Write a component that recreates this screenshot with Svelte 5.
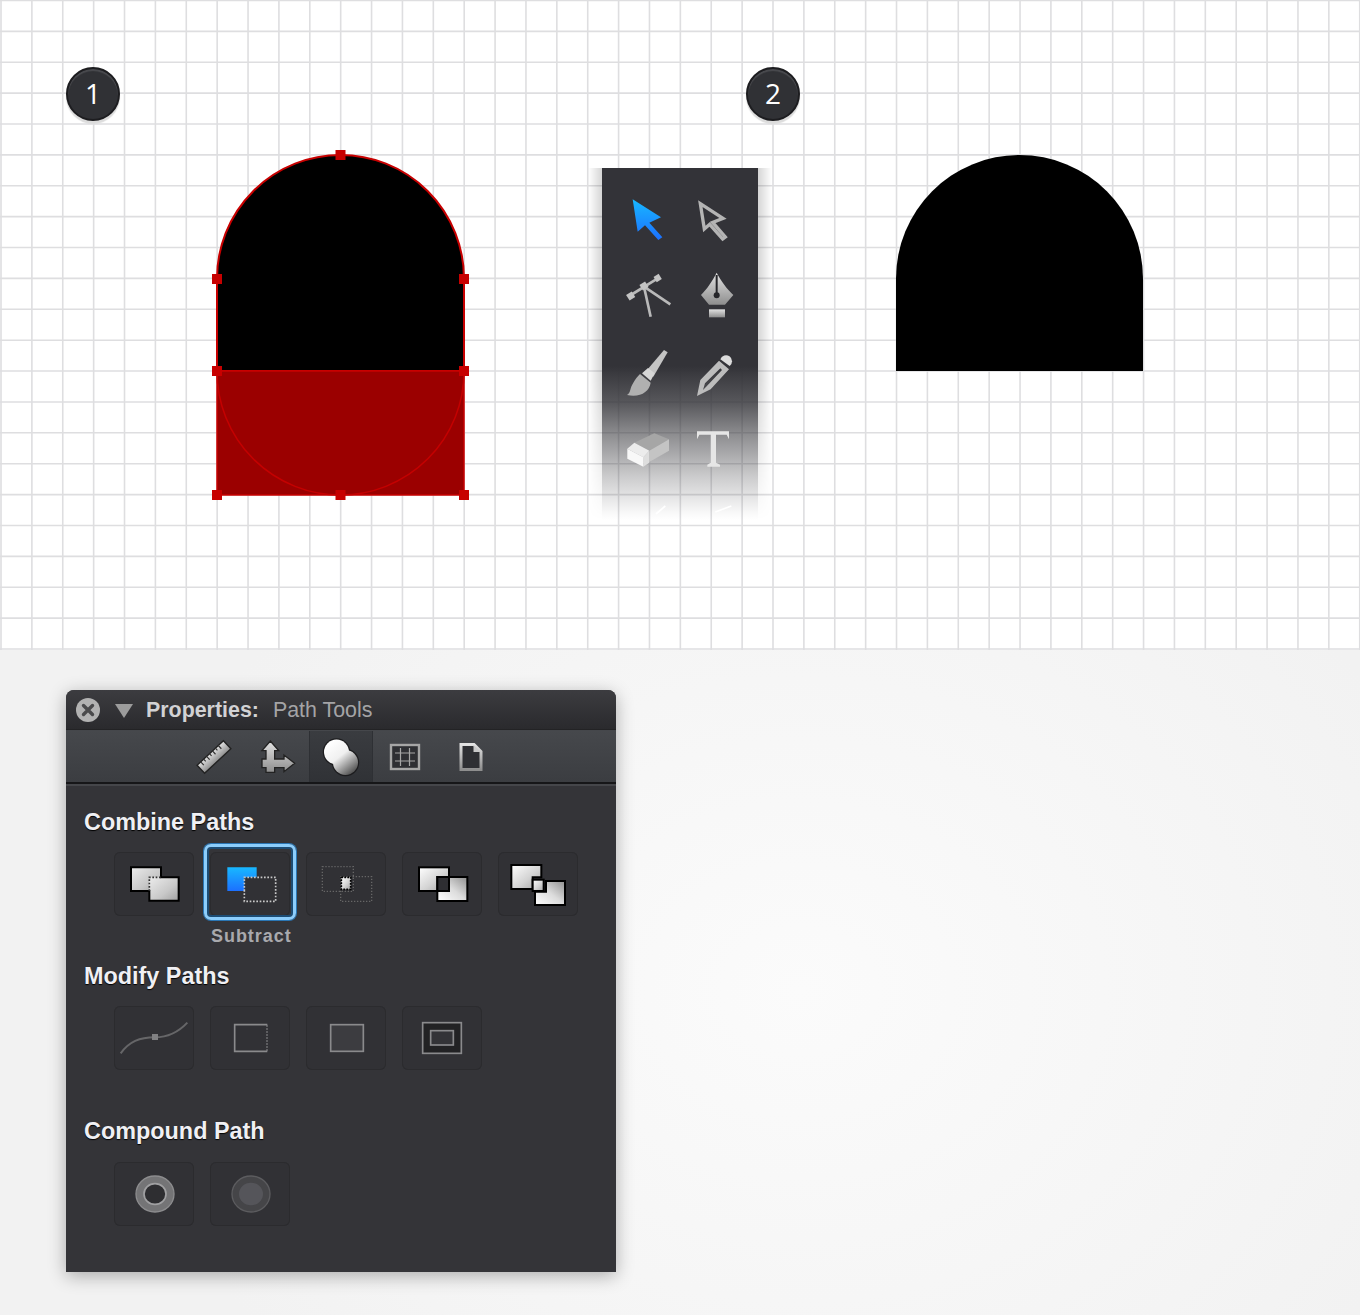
<script>
  // grid period measured from the reference
  const step = 30.88;
  const vLines = Array.from({ length: 45 }, (_, i) => 1 + i * step);
  const hLines = Array.from({ length: 22 }, (_, i) => 0.5 + i * step);
  const handles = [
    [340.5, 155], [217, 279], [464, 279], [217, 371],
    [464, 371], [217, 495], [340.5, 495], [464, 495]
  ];
</script>

<div class="page">
  <section class="canvas">
    <svg class="art" width="1360" height="650" viewBox="0 0 1360 650">
      <defs>
        <linearGradient id="metal" x1="0" y1="0" x2="0" y2="1">
          <stop offset="0" stop-color="#e2e2e2" />
          <stop offset="1" stop-color="#8e8e8e" />
        </linearGradient>
        <linearGradient id="sheet" x1="0" y1="0" x2="1" y2="1">
          <stop offset="0" stop-color="#ffffff" />
          <stop offset="0.55" stop-color="#d4d4d4" />
          <stop offset="1" stop-color="#a2a2a2" />
        </linearGradient>
        <linearGradient id="sheetDim" x1="0" y1="0" x2="1" y2="1">
          <stop offset="0" stop-color="#ececec" />
          <stop offset="0.6" stop-color="#c8c8c8" />
          <stop offset="1" stop-color="#a0a0a0" />
        </linearGradient>
        <linearGradient id="sheetBack" x1="0" y1="1" x2="1" y2="0">
          <stop offset="0" stop-color="#ffffff" />
          <stop offset="0.5" stop-color="#dcdcdc" />
          <stop offset="1" stop-color="#8f8f8f" />
        </linearGradient>
        <linearGradient id="ball" gradientUnits="userSpaceOnUse" x1="8" y1="6" x2="32" y2="36">
          <stop offset="0" stop-color="#ffffff" />
          <stop offset="0.45" stop-color="#f0f0f0" />
          <stop offset="1" stop-color="#505050" />
        </linearGradient>
        <linearGradient id="blue" x1="0" y1="0" x2="0" y2="1">
          <stop offset="0" stop-color="#18b8ff" />
          <stop offset="1" stop-color="#1c70ff" />
        </linearGradient>
      </defs>
      {#each vLines as x}
        <line x1={x} y1="0" x2={x} y2="650" class="grid" />
      {/each}
      {#each hLines as y}
        <line x1="0" y1={y} x2="1360" y2={y} class="grid" />
      {/each}

      <path d="M217 371V278.5A123.5 123.5 0 0 1 464 278.5V371Z" fill="#000" stroke="#c80000" stroke-width="2" />
      <rect x="217" y="371" width="247" height="124" fill="#9b0000" stroke="#c80000" stroke-width="1.5" />
      <path d="M217 371.5A123.5 123.5 0 0 0 464 371.5" fill="none" stroke="#c40000" stroke-width="1.5" />
      {#each handles as [x, y]}
        <rect x={x - 5} y={y - 5} width="10" height="10" fill="#c70000" />
      {/each}

      <path d="M896 371V278.5A123.5 123.5 0 0 1 1143 278.5V371Z" fill="#000" />
    </svg>

    <div class="badge one">1</div>
    <div class="badge two">2</div>

    <div class="tools">
      <svg viewBox="75 66 198 228" width="66" height="76">
        <polygon points="128,118 213,172 178,188 217,232 205,240 165,196 143,215" fill="url(#blue)" />
      </svg>
      <svg viewBox="273 66 198 228" width="66" height="76">
        <polygon points="331,131 399,175 368,187 406,231 398,237 359,193 343,207" fill="none" stroke="#b4b4b4" stroke-width="10" stroke-linejoin="miter" />
      </svg>

      <svg viewBox="75 294 198 228" width="66" height="76">
        <g stroke="#b9b9b9" stroke-width="8" fill="none">
          <line x1="118" y1="408" x2="208" y2="352" />
          <line x1="162" y1="380" x2="182" y2="470" />
          <line x1="162" y1="380" x2="241" y2="433" />
        </g>
        <rect x="112" y="398" width="20" height="20" fill="#c4c4c4" transform="rotate(-32 122 408)" />
        <rect x="152" y="368" width="20" height="20" fill="#c4c4c4" transform="rotate(-32 162 378)" />
        <rect x="194" y="345" width="18" height="18" fill="#c4c4c4" transform="rotate(-32 203 354)" />
      </svg>
      <svg viewBox="273 294 198 228" width="66" height="76">
        <path d="M380 338C392 362 412 388 430 405L405 434H357L333 405C350 388 368 362 380 338Z" fill="url(#metal)" />
        <line x1="380" y1="345" x2="380" y2="400" stroke="#26262a" stroke-width="6" />
        <circle cx="380" cy="406" r="9" fill="#26262a" />
        <rect x="357" y="448" width="48" height="24" fill="url(#metal)" />
      </svg>

      <svg viewBox="75 522 198 228" width="66" height="76">
        <polygon points="222,570 233,577 190,650 166,636" fill="#c4c4c4" />
        <polygon points="156,640 174,624 194,640 182,662" fill="#d6d6d6" />
        <path d="M150 642L182 668C178 695 150 714 111 705C124 696 118 686 130 668C136 658 142 650 150 642Z" fill="#b0b0b0" />
      </svg>
      <svg viewBox="273 522 198 228" width="66" height="76">
        <path d="M391 598A18 18 0 1 1 419 618Z" fill="#dcdcdc" />
        <path d="M321 708L331 660L387 602L417 628L362 688ZM339 690L350 679L396 630L391 625L345 670Z" fill="#bcbcbc" fill-rule="evenodd" />
      </svg>

      <svg viewBox="75 750 198 228" width="66" height="76">
        <polygon points="133,848 193,820 237,838 178,872" fill="#a6a6a6" />
        <polygon points="178,872 237,838 237,872 178,906" fill="#c4c4c4" />
        <polygon points="160,892 178,872 178,908 160,920" fill="#dedede" />
        <polygon points="112,866 133,848 178,872 160,892" fill="#ececec" />
        <polygon points="112,866 160,892 160,920 112,896" fill="#f8f8f8" />
      </svg>
      <svg viewBox="273 750 198 228" width="66" height="76">
        <path d="M321 814H417V838L410 824H378V908L390 914V920H352V914L362 908V824H328L321 838Z" fill="#e6e6e6" />
      </svg>

      <svg viewBox="75 978 198 114" width="66" height="38">
        <line x1="198" y1="1062" x2="226" y2="1038" stroke="#fff" stroke-width="5" />
      </svg>
      <svg viewBox="273 978 198 114" width="66" height="38">
        <line x1="376" y1="1056" x2="424" y2="1038" stroke="#fff" stroke-width="5" />
      </svg>
    </div>
  </section>

  <section class="lower">
    <div class="panel">
      <header class="titlebar">
        <svg width="24" height="24" viewBox="0 0 24 24">
          <circle cx="12" cy="12" r="12" fill="#b2b2b2" />
          <path d="M7.5 7.5L16.5 16.5M16.5 7.5L7.5 16.5" stroke="#4a4a4c" stroke-width="3.4" stroke-linecap="round" />
        </svg>
        <span class="arrow"></span>
        <strong>Properties:</strong>
        <span class="subtitle">Path Tools</span>
      </header>

      <nav class="tabs">
        <div class="tab">
          <svg width="40" height="40" viewBox="0 0 40 40">
            <g transform="rotate(-43 21 20)">
              <rect x="3" y="14.5" width="36" height="11" fill="url(#metal)" stroke="#222" stroke-width="1.4" />
              <path d="M8 14.5v4.5M12 14.5v3M16 14.5v4.5M20 14.5v3M24 14.5v4.5M28 14.5v3M32 14.5v4.5" stroke="#333" stroke-width="1.2" />
            </g>
          </svg>
        </div>
        <div class="tab narrow">
          <svg width="40" height="40" viewBox="208 21 120 120">
            <polygon points="245,33 270,62 258,62 258,87 286,87 286,75 318,100 286,125 286,113 258,113 258,127 232,127 232,113 220,113 220,87 232,87 232,62 220,62" fill="url(#metal)" stroke="#222" stroke-width="4" />
          </svg>
        </div>
        <div class="tab active">
          <svg width="40" height="40" viewBox="0 0 40 40">
            <circle cx="15.5" cy="15" r="12.5" fill="#1c1c1e" stroke="#1c1c1e" stroke-width="2.4" />
            <circle cx="24.5" cy="25.5" r="12.5" fill="#1c1c1e" stroke="#1c1c1e" stroke-width="2.4" />
            <circle cx="15.5" cy="15" r="12.5" fill="url(#ball)" />
            <circle cx="24.5" cy="25.5" r="12.5" fill="url(#ball)" />
          </svg>
        </div>
        <div class="tab">
          <svg width="32" height="28" viewBox="0 0 32 28">
            <rect x="2" y="2" width="28" height="24" fill="#2e2f33" stroke="#a6a6a6" stroke-width="2.4" />
            <path d="M6 10H26M6 18H26M11.5 5V23M20.5 5V23" stroke="#a6a6a6" stroke-width="1.2" />
          </svg>
        </div>
        <div class="tab">
          <svg width="24" height="28" viewBox="0 0 24 28">
            <path d="M2 1.5H15L22 8.5V26.5H2Z" fill="#2e2f33" stroke="url(#metal)" stroke-width="3" />
            <path d="M14.5 2V9H22Z" fill="#c8c8c8" />
          </svg>
        </div>
      </nav>

      <div class="content">
        <h3>Combine Paths</h3>
        <div class="row">
          <button>
            <svg viewBox="42 36 240 192" width="80" height="64">
              <rect x="93" y="82" width="90" height="71" fill="url(#sheetDim)" />
              <rect x="148" y="112" width="88" height="70" fill="url(#sheetDim)" />
              <path d="M93 82H183V112H236V182H148V153H93Z" fill="none" stroke="#000" stroke-width="6" />
              <path d="M148 153V112H183" fill="none" stroke="#333" stroke-width="5" stroke-dasharray="5 5" />
            </svg>
          </button>
          <button class="selected">
            <svg viewBox="330 36 240 192" width="80" height="64">
              <path d="M382 82H470V112H433V153H382Z" fill="url(#blue)" />
              <path d="M433 153V112H527V184H433Z" fill="none" stroke="#c8c8c8" stroke-width="5" stroke-dasharray="5 5" />
            </svg>
          </button>
          <button>
            <svg viewBox="618 36 240 192" width="80" height="64">
              <rect x="667" y="80" width="93" height="74" fill="none" stroke="#666" stroke-width="4" stroke-dasharray="4 5" />
              <rect x="722" y="110" width="93" height="74" fill="none" stroke="#666" stroke-width="4" stroke-dasharray="4 5" />
              <rect x="724" y="112" width="28" height="36" fill="url(#sheet)" stroke="#000" stroke-width="5" stroke-dasharray="5 4" />
            </svg>
          </button>
          <button>
            <svg viewBox="906 36 240 192" width="80" height="64">
              <rect x="957" y="82" width="90" height="71" fill="url(#sheet)" stroke="#000" stroke-width="6" />
              <rect x="1012" y="111" width="90" height="72" fill="url(#sheetBack)" stroke="#000" stroke-width="6" />
              <rect x="1012" y="111" width="35" height="42" fill="#2e2e32" stroke="#000" stroke-width="6" />
            </svg>
          </button>
          <button>
            <svg viewBox="1194 36 240 192" width="80" height="64">
              <path d="M1234 75H1324V112H1298V147H1234Z" fill="url(#sheet)" stroke="#000" stroke-width="6" />
              <path d="M1338 123H1395V195H1305V155H1338Z" fill="url(#sheetBack)" stroke="#000" stroke-width="6" />
              <rect x="1298" y="119" width="33" height="34" fill="url(#sheet)" stroke="#000" stroke-width="6" />
            </svg>
          </button>
        </div>
        <p class="caption">Subtract</p>

        <h3>Modify Paths</h3>
        <div class="row">
          <button>
            <svg viewBox="42 18 240 192" width="80" height="64">
              <path d="M62 160C88 125 118 112 165 112C200 112 232 100 262 68" fill="none" stroke="#666668" stroke-width="6" />
              <rect x="156" y="102" width="18" height="18" fill="#808082" />
            </svg>
          </button>
          <button>
            <svg viewBox="330 18 240 192" width="80" height="64">
              <path d="M502 74H404V154H502" fill="none" stroke="#8a8a8c" stroke-width="5" />
              <path d="M501 76V152" stroke="#8a8a8c" stroke-width="4" stroke-dasharray="4 5" />
            </svg>
          </button>
          <button>
            <svg viewBox="618 18 240 192" width="80" height="64">
              <rect x="692" y="74" width="98" height="80" fill="#3c3c40" stroke="#8a8a8c" stroke-width="5" />
            </svg>
          </button>
          <button>
            <svg viewBox="906 18 240 192" width="80" height="64">
              <rect x="968" y="68" width="116" height="92" fill="#222224" stroke="#8a8a8c" stroke-width="5" />
              <rect x="992" y="92" width="68" height="43" fill="#333337" stroke="#8a8a8c" stroke-width="5" />
            </svg>
          </button>
        </div>

        <h3 class="last">Compound Path</h3>
        <div class="row">
          <button>
            <svg viewBox="42 486 240 192" width="80" height="64">
              <ellipse cx="165" cy="582" rx="57" ry="54" fill="#747476" stroke="#8c8c8e" stroke-width="4" />
              <ellipse cx="165" cy="582" rx="33" ry="31" fill="#2e2e31" stroke="#a0a0a2" stroke-width="5" />
            </svg>
          </button>
          <button>
            <svg viewBox="330 486 240 192" width="80" height="64">
              <ellipse cx="453" cy="582" rx="57" ry="54" fill="#454548" stroke="#5c5c5f" stroke-width="4" />
              <ellipse cx="453" cy="582" rx="36" ry="34" fill="#55555a" />
            </svg>
          </button>
        </div>
      </div>
    </div>
  </section>
</div>

<style>
  :global(body) {
    margin: 0;
    background: #f2f2f2;
  }

  .page {
    width: 1360px;
    height: 1315px;
    overflow: hidden;
    font-family: "Liberation Sans", Arial, sans-serif;
  }

  .canvas {
    position: relative;
    height: 650px;
    background: #fff;
  }

  .art {
    display: block;
  }

  .grid {
    stroke: #dedee0;
    stroke-width: 1.6;
  }

  .badge {
    position: absolute;
    top: 67px;
    width: 50px;
    height: 50px;
    border: 2px solid #1d1d20;
    border-radius: 50%;
    background: #303135;
    box-shadow: inset 0 2px 1px #4a4b4f, 0 3px 1px #dcdcdc;
    color: #fff;
    font: 28px/48px "Open Sans", sans-serif;
    text-align: center;
  }

  .badge.one {
    left: 66px;
  }

  .badge.two {
    left: 746px;
  }

  .tools {
    position: absolute;
    left: 602px;
    top: 168px;
    width: 156px;
    height: 352px;
    box-sizing: border-box;
    padding: 14px 11px 0 13px;
    display: grid;
    grid-template-columns: 66px 66px;
    grid-auto-rows: 76px;
    background: linear-gradient(to bottom,
      #333338 0, #333338 198px,
      rgba(51, 51, 56, 0.82) 235px,
      rgba(51, 51, 56, 0.57) 265px,
      rgba(51, 51, 56, 0.25) 309px,
      rgba(51, 51, 56, 0.03) 345px,
      rgba(51, 51, 56, 0) 352px);
  }

  .tools::before,
  .tools::after {
    content: "";
    position: absolute;
    top: 0;
    bottom: 0;
    width: 14px;
    -webkit-mask-image: linear-gradient(to bottom, #000 60%, transparent);
    mask-image: linear-gradient(to bottom, #000 60%, transparent);
  }

  .tools::before {
    right: 100%;
    background: linear-gradient(to left, rgba(0, 0, 0, 0.16), transparent);
  }

  .tools::after {
    left: 100%;
    background: linear-gradient(to right, rgba(0, 0, 0, 0.16), transparent);
  }

  .tools svg {
    display: block;
  }

  .lower {
    height: 665px;
    box-sizing: border-box;
    padding: 40px 0 0 66px;
    background: radial-gradient(ellipse 680px 560px at 800px 340px, #fbfbfb 0, #f2f2f2 100%);
  }

  .panel {
    width: 550px;
    height: 582px;
    border-radius: 8px 8px 0 0;
    background: #343438;
    box-shadow: 0 4px 18px rgba(0, 0, 0, 0.3);
    display: flex;
    flex-direction: column;
  }

  .titlebar {
    height: 40px;
    display: flex;
    align-items: center;
    padding: 1px 0 0 10px;
    box-sizing: border-box;
    border-radius: 8px 8px 0 0;
    background: linear-gradient(to bottom, #3c3c40, #2a2a2d);
    border-bottom: 1px solid #232325;
    font-size: 21.4px;
    color: #d2d2d4;
    flex: none;
  }

  .arrow {
    width: 0;
    height: 0;
    margin: 1px 13px 0 15px;
    border-left: 9px solid transparent;
    border-right: 9px solid transparent;
    border-top: 14px solid #9c9c9c;
  }

  .titlebar strong {
    font-weight: 700;
    margin-right: 14px;
  }

  .subtitle {
    color: #a4a4a6;
  }

  .tabs {
    height: 54px;
    flex: none;
    padding-left: 114px;
    display: flex;
    background: linear-gradient(to bottom, #46484c, #3b3d41);
    border-top: 1px solid #45474b;
    border-bottom: 2px solid #161618;
    box-shadow: 0 2px 0 #45464a;
    box-sizing: border-box;
  }

  .tab {
    width: 66px;
    display: flex;
    align-items: center;
    justify-content: center;
  }

  .tab.narrow {
    width: 64px;
  }

  .tab.active {
    width: 62px;
    background: linear-gradient(to bottom, #3a3c40, #303236);
    box-shadow: -1px 0 0 #2e3034, 1px 0 0 #2e3034;
  }

  .content {
    padding: 25px 0 0 18px;
  }

  h3 {
    margin: 0 0 17px;
    font-size: 23.4px;
    line-height: 26px;
    font-weight: 700;
    color: #f0f0f4;
    text-shadow: 0 1px 1px #000;
  }

  h3.last {
    margin: 48px 0 18px;
  }

  .row {
    display: flex;
    gap: 16px;
    padding-left: 30px;
  }

  button {
    position: relative;
    width: 80px;
    height: 64px;
    padding: 0;
    background: #313135;
    border: 0;
    border-radius: 6px;
    box-shadow: inset 0 0 0 1px #2b2b2e;
  }

  button svg {
    display: block;
  }

  .selected::after {
    content: "";
    position: absolute;
    inset: -8px -6px -4px -6px;
    border: 3px solid #8ccdfb;
    border-radius: 7px;
    box-shadow: 0 0 0 1px #2a76b4, inset 0 0 0 2px #1c4c74;
  }

  .caption {
    margin: 0 0 13px 96px;
    padding-left: 31px;
    width: 80px;
    height: 34px;
    font-size: 18px;
    line-height: 40px;
    font-weight: 700;
    letter-spacing: 0.95px;
    color: #a9a9ad;
    text-align: center;
    white-space: nowrap;
  }
</style>
